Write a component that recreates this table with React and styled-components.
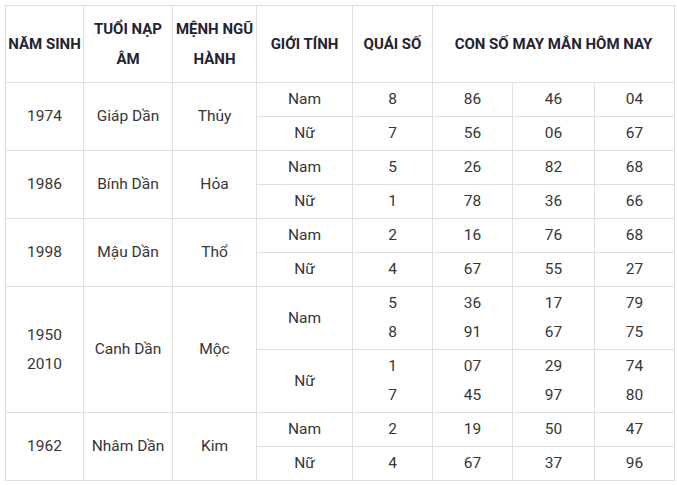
import React from 'react'
import styled, { createGlobalStyle } from 'styled-components'

const GlobalStyle = createGlobalStyle`
  body {
    margin: 0;
    background: #fff;
    font-family: Roboto, 'Liberation Sans', sans-serif;
  }
`

const Wrap = styled.div`
  padding: 5px 0 0 5px;
`

const Table = styled.table`
  border-collapse: collapse;
  table-layout: fixed;
  width: 669px;
  color: #363636;
  font-size: 15.5px;
`

const HeadCell = styled.th`
  border: 1px solid #dedede;
  padding: 8px 2px;
  line-height: 30px;
  font-weight: 700;
  font-size: 15px;
  color: #24232f;
  text-align: center;
  vertical-align: middle;
`

const Cell = styled.td`
  border: 1px solid #dedede;
  padding: 2px 3px 2px;
  line-height: 29px;
  text-align: center;
  vertical-align: middle;
`

const widths = [78, 89, 84, 96, 80, 80, 82, 80]

const data = [
  {
    year: ['1974'], tuoi: 'Giáp Dần', menh: 'Thủy',
    rows: [
      { g: 'Nam', q: ['8'], n: [['86'], ['46'], ['04']] },
      { g: 'Nữ', q: ['7'], n: [['56'], ['06'], ['67']] },
    ],
  },
  {
    year: ['1986'], tuoi: 'Bính Dần', menh: 'Hỏa',
    rows: [
      { g: 'Nam', q: ['5'], n: [['26'], ['82'], ['68']] },
      { g: 'Nữ', q: ['1'], n: [['78'], ['36'], ['66']] },
    ],
  },
  {
    year: ['1998'], tuoi: 'Mậu Dần', menh: 'Thổ',
    rows: [
      { g: 'Nam', q: ['2'], n: [['16'], ['76'], ['68']] },
      { g: 'Nữ', q: ['4'], n: [['67'], ['55'], ['27']] },
    ],
  },
  {
    year: ['1950', '2010'], tuoi: 'Canh Dần', menh: 'Mộc',
    rows: [
      { g: 'Nam', q: ['5', '8'], n: [['36', '91'], ['17', '67'], ['79', '75']] },
      { g: 'Nữ', q: ['1', '7'], n: [['07', '45'], ['29', '97'], ['74', '80']] },
    ],
  },
  {
    year: ['1962'], tuoi: 'Nhâm Dần', menh: 'Kim',
    rows: [
      { g: 'Nam', q: ['2'], n: [['19'], ['50'], ['47']] },
      { g: 'Nữ', q: ['4'], n: [['67'], ['37'], ['96']] },
    ],
  },
]

const Lines = ({ items }) => items.map((t, i) => (
  <React.Fragment key={i}>{i > 0 && <br />}{t}</React.Fragment>
))

export default function App() {
  return (
    <Wrap>
      <GlobalStyle />
      <Table>
        <colgroup>
          {widths.map((w, i) => <col key={i} style={{ width: w }} />)}
        </colgroup>
        <thead>
          <tr>
            <HeadCell>NĂM SINH</HeadCell>
            <HeadCell>TUỔI NẠP ÂM</HeadCell>
            <HeadCell>MỆNH NGŨ HÀNH</HeadCell>
            <HeadCell>GIỚI TÍNH</HeadCell>
            <HeadCell>QUÁI SỐ</HeadCell>
            <HeadCell colSpan={3}>CON SỐ MAY MẮN HÔM NAY</HeadCell>
          </tr>
        </thead>
        <tbody>
          {data.map(group => group.rows.map((r, ri) => (
            <tr key={group.tuoi + ri}>
              {ri === 0 && (
                <>
                  <Cell rowSpan={2}><Lines items={group.year} /></Cell>
                  <Cell rowSpan={2}>{group.tuoi}</Cell>
                  <Cell rowSpan={2}>{group.menh}</Cell>
                </>
              )}
              <Cell>{r.g}</Cell>
              <Cell><Lines items={r.q} /></Cell>
              {r.n.map((n, ni) => <Cell key={ni}><Lines items={n} /></Cell>)}
            </tr>
          )))}
        </tbody>
      </Table>
    </Wrap>
  )
}
